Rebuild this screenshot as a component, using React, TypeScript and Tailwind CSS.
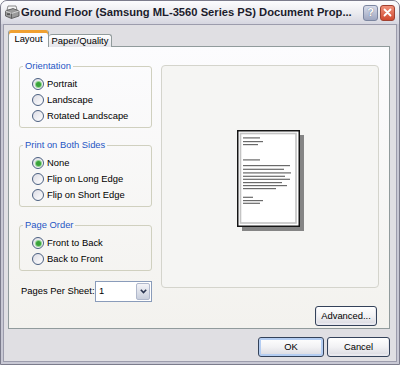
import React from 'react';

type RadioProps = {
    label: string;
    checked?: boolean;
};

function Radio({ label, checked }: RadioProps) {
    return (
        <div className="flex h-[16px] items-center gap-[2px]">
            <span className="flex h-[12px] w-[12px] items-center justify-center rounded-full border border-[#4a5f80] bg-gradient-to-br from-[#dcdce4] to-white">
                {checked && (
                    <span className="h-[5px] w-[5px] rounded-full bg-[#3aa23a] shadow-[0_0_0_1px_#8fd48f]" />
                )}
            </span>
            <span className="pl-[1px] text-[9.4px] leading-none text-black">{label}</span>
        </div>
    );
}

function Group({ title, items, checked, className }: { title: string; items: string[]; checked: number; className?: string }) {
    return (
        <fieldset className={`rounded-[3px] border border-[#d0d0bf] pb-[3px] pl-[12px] ${className ?? ''}`}>
            <legend className="ml-[-9px] px-[2px] text-[9.4px] leading-[12px] text-[#1f56c4]">{title}</legend>
            <div className="pt-[4px]">
                {items.map((item, i) => (
                    <Radio key={item} label={item} checked={i === checked} />
                ))}
            </div>
        </fieldset>
    );
}

function XpButton({ label, primary, className }: { label: string; primary?: boolean; className?: string }) {
    return (
        <button
            type="button"
            className={`flex h-[20px] items-center justify-center rounded-[3px] border border-[#34425a] bg-gradient-to-b from-white via-[#f2f2f4] to-[#d8d8e0] text-[9.4px] text-black ${
                primary ? 'shadow-[inset_0_0_0_2px_#b4cdf2]' : 'shadow-[inset_0_-1px_0_1px_#e8e8ee]'
            } ${className ?? ''}`}
        >
            {label}
        </button>
    );
}

const pageLines: [number, number][] = [
    [7.3, 17], [11, 20], [14, 15],
    [29.3, 17],
    [35, 47], [38.7, 41], [42.3, 48], [45.7, 42], [48.7, 47], [52, 39], [55, 44], [58, 33],
    [66.7, 10], [70, 20], [72.7, 17],
];

function PagePreview() {
    return (
        <svg width="68" height="102" viewBox="0 0 68 102">
            <rect x="5" y="5" width="62" height="96" fill="#858585" />
            <rect x="0.75" y="0.75" width="61.5" height="95.5" fill="#fff" stroke="#151515" strokeWidth="1.5" />
            <rect x="3.5" y="3.5" width="55.5" height="89.5" fill="none" stroke="#c4c4c4" strokeWidth="1.6" />
            {pageLines.map(([y, w], i) => (
                <rect key={i} x="6" y={y} width={w} height="1.2" fill="#6a6a6a" />
            ))}
        </svg>
    );
}

function PrinterIcon() {
    return (
        <svg width="16" height="15" viewBox="0 0 16 15">
            <path d="M4 1 L12 1 L13 5 L3 5 Z" fill="#f4f4f4" stroke="#707070" strokeWidth="0.8" />
            <path d="M1.5 6 L9 3.5 L15 6 L15 11 L7.5 13.5 L1.5 11 Z" fill="#9a9a9a" stroke="#505050" strokeWidth="0.8" />
            <path d="M1.5 6 L7.5 8.5 L15 6" fill="none" stroke="#e0e0e0" strokeWidth="0.8" />
            <path d="M7.5 8.5 L7.5 13.5" stroke="#505050" strokeWidth="0.8" />
            <rect x="3" y="8.5" width="3" height="1.2" fill="#3a3a3a" />
        </svg>
    );
}

export default function App() {
    return (
        <div className="h-[365px] w-[400px] overflow-hidden bg-[#fdfdfd] font-['Liberation_Sans',Arial,sans-serif]">
            <div className="flex h-full flex-col rounded-t-[7px] border border-[#7c7c8c] bg-[#c8c8d4]">
                <div className="flex h-[23px] shrink-0 items-center rounded-t-[6px] bg-gradient-to-b from-[#fcfcfe] via-[#ececf0] to-[#d6d6e0] pl-[3px] pr-[4px]">
                    <PrinterIcon />
                    <span className="ml-[1px] whitespace-nowrap text-[11.2px] font-bold text-[#1c1c2c]">
                        Ground Floor (Samsung ML-3560 Series PS) Document Prop...
                    </span>
                    <div className="ml-auto flex gap-[2px]">
                        <div className="flex h-[16px] w-[15px] items-center justify-center rounded-[3px] border border-[#7c86a0] bg-gradient-to-b from-[#d8dcea] to-[#9ea6c0] text-[11px] font-bold leading-none text-white [text-shadow:0_0_1px_#4a5470]">
                            ?
                        </div>
                        <div className="flex h-[16px] w-[15px] items-center justify-center rounded-[3px] border border-[#a04030] bg-gradient-to-b from-[#f0907a] to-[#d0482e]">
                            <svg width="9" height="9" viewBox="0 0 9 9">
                                <path d="M1.5 1.5 L7.5 7.5 M7.5 1.5 L1.5 7.5" stroke="#fff" strokeWidth="1.8" strokeLinecap="round" />
                            </svg>
                        </div>
                    </div>
                </div>

                <div className="mx-[2px] mb-[2px] flex flex-1 flex-col border border-[#9c9cac] bg-[#e0dfe3] pl-[4px] pr-[6px] pt-[5px]">
                    <div className="relative z-10 -mb-px flex h-[17px] items-end">
                        <div className="flex h-[17px] w-[41px] items-center justify-center rounded-t-[3px] border-x border-[#919b9c] bg-[#fcfcfe] shadow-[inset_0_3px_0_#f0a030] pt-[2px] text-[9.4px] text-black">
                            Layout
                        </div>
                        <div className="flex h-[13px] w-[63px] items-center justify-center rounded-t-[3px] border border-b-0 border-l-0 border-[#919b9c] bg-gradient-to-b from-white to-[#e4e4ea] text-[9.4px] text-black">
                            Paper/Quality
                        </div>
                    </div>

                    <div className="flex h-[283px] flex-col border border-[#919b9c] bg-gradient-to-b from-[#fcfcfe] to-[#f3f2ee] pl-[10px] pr-[10px] pt-[13px]">
                        <div className="flex">
                            <div className="flex w-[133px] flex-col">
                                <Group title="Orientation" items={['Portrait', 'Landscape', 'Rotated Landscape']} checked={0} />
                                <Group className="mt-[11px]" title="Print on Both Sides" items={['None', 'Flip on Long Edge', 'Flip on Short Edge']} checked={0} />
                                <Group className="mt-[12px]" title="Page Order" items={['Front to Back', 'Back to Front']} checked={0} />
                                <div className="mt-[10px] flex h-[21px] items-center">
                                    <span className="ml-[2px] text-[9.4px] text-black">Pages Per Sheet:</span>
                                    <div className="ml-auto flex h-[21px] w-[57px] items-center border border-[#8a9cba] bg-white pl-[3px] pr-[1px]">
                                        <span className="text-[9.4px] text-black">1</span>
                                        <div className="ml-auto flex h-[17px] w-[14px] items-center justify-center rounded-[2px] border border-[#b0b8cc] bg-gradient-to-b from-[#f4f4f8] to-[#c8cedc]">
                                            <svg width="7" height="5" viewBox="0 0 7 5">
                                                <path d="M0.8 0.8 L3.5 3.6 L6.2 0.8" fill="none" stroke="#2a3550" strokeWidth="1.6" />
                                            </svg>
                                        </div>
                                    </div>
                                </div>
                            </div>

                            <div className="ml-[9px] mt-[5px] flex h-[223px] w-[218px] items-center justify-center rounded-[4px] border border-[#d4d4cc] bg-[#f5f5f3] pl-[2px] pt-[9px]">
                                <PagePreview />
                            </div>
                        </div>

                        <div className="mt-[4px] flex justify-end pr-[2px]">
                            <XpButton label="Advanced..." className="w-[62px]" />
                        </div>
                    </div>

                    <div className="mt-[8px] flex justify-end gap-[3px]">
                        <XpButton label="OK" primary className="w-[66px]" />
                        <XpButton label="Cancel" className="w-[63px]" />
                    </div>
                </div>
            </div>
        </div>
    );
}
